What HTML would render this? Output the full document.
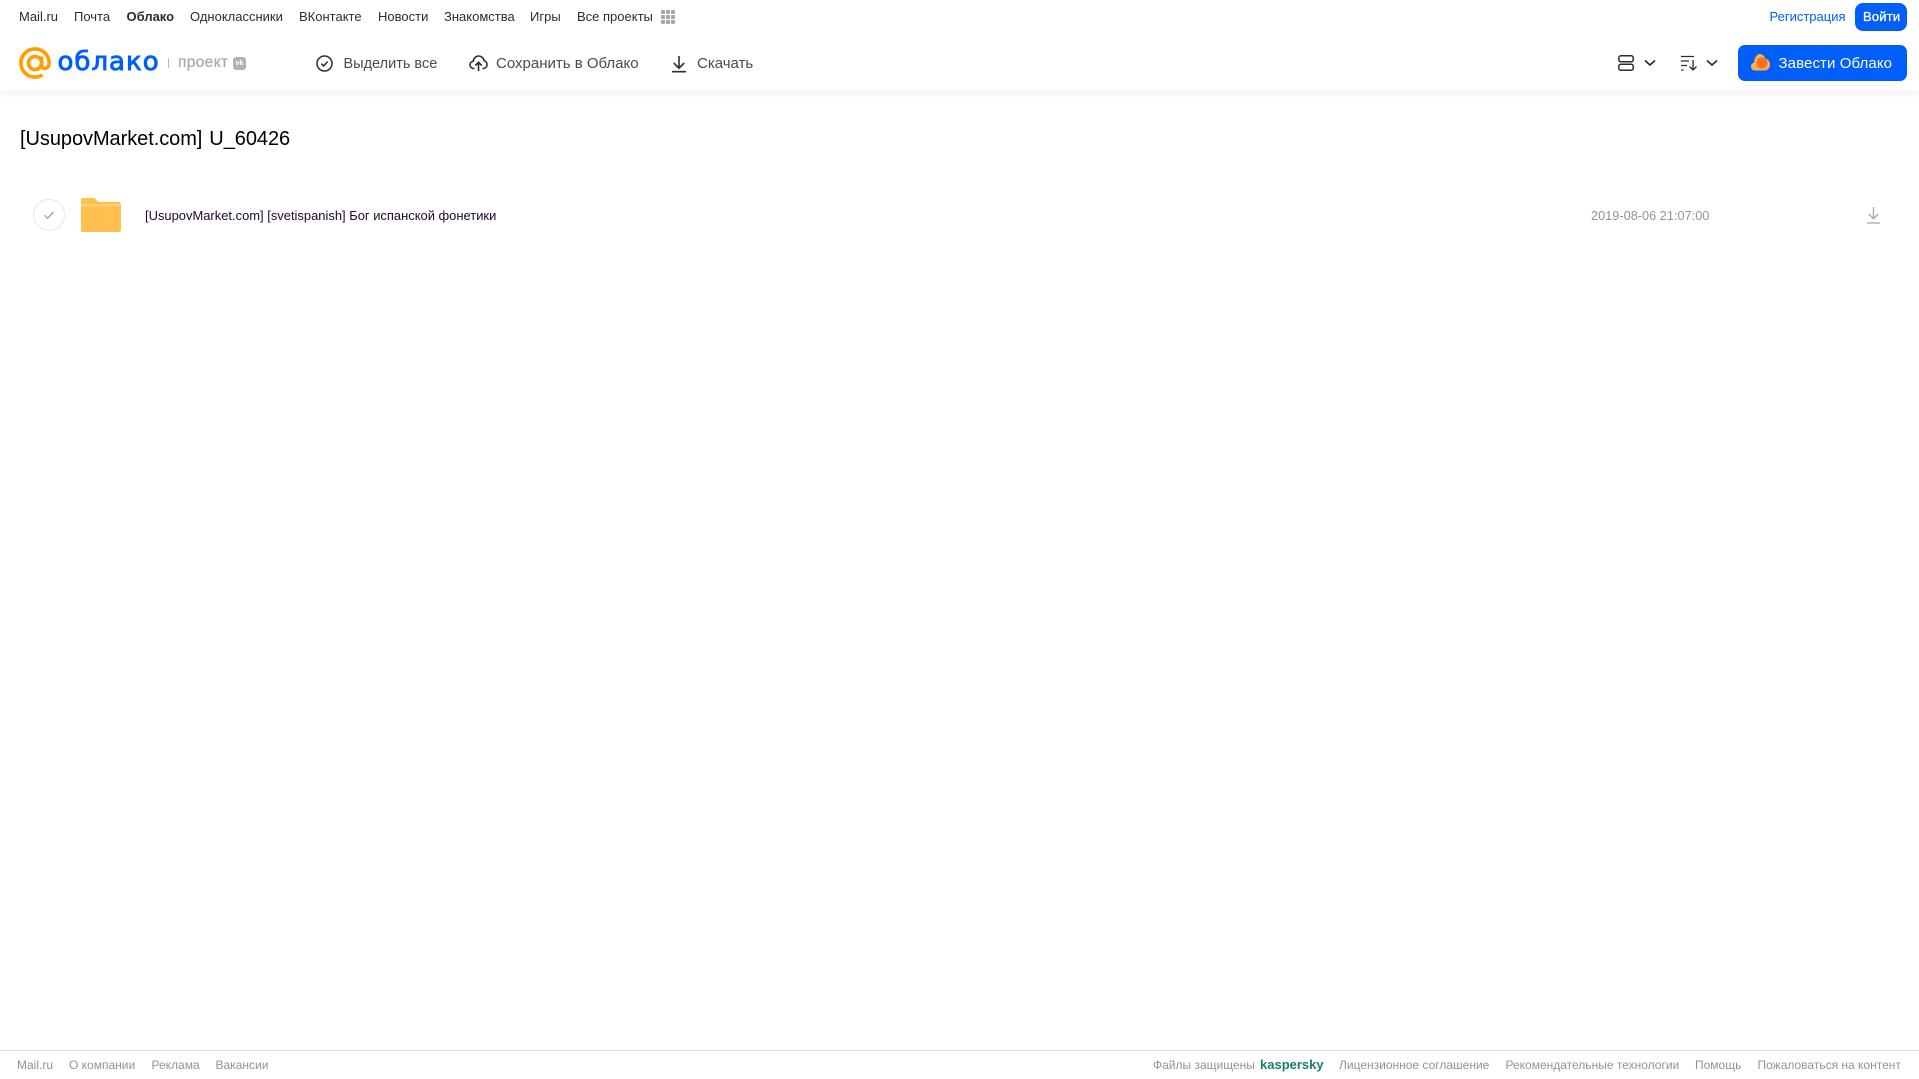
<!DOCTYPE html>
<html lang="ru"><head><meta charset="utf-8"><title>Облако</title>
<style>
html,body{margin:0;padding:0;background:#fff;width:1919px;height:1079px;overflow:hidden}
body{position:relative;font-family:"Liberation Sans","Noto Sans CJK SC",sans-serif}
.t{position:absolute;white-space:nowrap;display:block;text-decoration:none}
.n{top:8px;line-height:17px;font-size:13px;color:#2c2d2e}
.b{top:55px;line-height:18px;font-size:15px;color:#4a4b4d}
.f{top:1057px;line-height:16px;font-size:12px;color:#919399}
svg{position:absolute;display:block}
</style></head><body>
<div style="position:absolute;left:0;top:0;width:1919px;height:91px;background:#fff;box-shadow:0 2px 8px rgba(0,0,0,.07)"></div>

<a class="t n" style="left:19px">Mail.ru</a>
<a class="t n" style="left:74px">Почта</a>
<a class="t n" style="left:126.5px;font-weight:bold">Облако</a>
<a class="t n" style="left:190px">Одноклассники</a>
<a class="t n" style="left:299px">ВКонтакте</a>
<a class="t n" style="left:378px">Новости</a>
<a class="t n" style="left:444px">Знакомства</a>
<a class="t n" style="left:530px">Игры</a>
<a class="t n" style="left:577px">Все проекты</a>
<svg style="left:661px;top:10px" width="14" height="14" fill="#a5a7ab"><rect width="4" height="4" rx="1"/><rect x="5" width="4" height="4" rx="1"/><rect x="10" width="4" height="4" rx="1"/><rect y="5" width="4" height="4" rx="1"/><rect x="5" y="5" width="4" height="4" rx="1"/><rect x="10" y="5" width="4" height="4" rx="1"/><rect y="10" width="4" height="4" rx="1"/><rect x="5" y="10" width="4" height="4" rx="1"/><rect x="10" y="10" width="4" height="4" rx="1"/></svg>

<a class="t n" style="left:1769.5px;color:#005ff9">Регистрация</a>
<div style="position:absolute;left:1855px;top:3px;width:52px;height:28px;border-radius:8px;background:#005ff9"></div>
<a class="t n" style="left:1863px;color:#fff;-webkit-text-stroke:.35px #fff;letter-spacing:.2px">Войти</a>

<!-- logo -->
<svg style="left:19px;top:47px" width="32" height="32" viewBox="0 0 32 32" fill="none" stroke="#ff9e00" stroke-width="3.6"><circle cx="16" cy="16" r="6.6"/><path d="M22.6 9.5v8.2c0 5.2 7.4 5.2 7.5-1.7C30.100 8 23.700 1.900 16 1.900 8.200 1.900 1.900 8.200 1.900 16S8.200 30.100 16 30.100c3 0 5.400-.8 7.500-2.200"/></svg>
<span class="t" style="left:57.500px;top:46px;line-height:32px;font-family:'DejaVu Sans',sans-serif;font-size:26px;color:#005ff9;-webkit-text-stroke:.9px #005ff9;letter-spacing:1px">облако</span>
<div style="position:absolute;left:168px;top:58px;width:1px;height:10px;background:#b8babd"></div>
<span class="t" style="left:178px;top:53px;line-height:19px;font-size:15.5px;color:#a9abaf;-webkit-text-stroke:.3px #a9abaf;letter-spacing:.35px">проект</span>
<div style="position:absolute;left:233px;top:57px;width:13px;height:13px;border-radius:3px;background:#b0b2b6;color:#fff;font:bold 7px/13px 'Liberation Sans',sans-serif;text-align:center">vk</div>

<!-- toolbar -->
<svg style="left:316px;top:55px" width="17" height="17" viewBox="0 0 17 17" fill="none" stroke="#2c2d2e" stroke-width="1.500"><circle cx="8.500" cy="8.500" r="7.500"/><path d="M5.300 8.700l2.300 2.300 4.100-4.500"/></svg>
<span class="t b" style="left:343.500px;font-size:14.500px">Выделить все</span>
<svg style="left:469px;top:54px" width="19" height="18" viewBox="0 0 19 18" fill="none" stroke="#2c2d2e" stroke-width="1.600"><path d="M5.500 14.500H4.800C2.600 14.500 1 12.900 1 10.900c0-1.800 1.300-3.300 3.100-3.600C4.500 4.300 6.800 2 9.600 2c2.800 0 5 2 5.500 4.700 1.700.4 2.900 2 2.900 3.900 0 2.200-1.700 3.900-3.800 3.900h-.7"/><path d="M9.500 17V8.500M6.300 11.500l3.200-3.200 3.200 3.200"/></svg>
<span class="t b" style="left:496px">Сохранить в Облако</span>
<svg style="left:671px;top:55px" width="16" height="18" viewBox="0 0 16 18" fill="none" stroke="#2c2d2e" stroke-width="1.600"><path d="M8 1v12M2.800 8L8 13.200 13.200 8M1 16.700h14"/></svg>
<span class="t b" style="left:697px">Скачать</span>

<svg style="left:1618px;top:55px" width="16" height="16" viewBox="0 0 16 16" fill="none" stroke="#2c2d2e" stroke-width="1.500"><rect x=".8" y=".8" width="14.400" height="6" rx="2"/><rect x=".8" y="9.200" width="14.400" height="6" rx="2"/></svg>
<svg style="left:1644px;top:59px" width="12" height="8" viewBox="0 0 12 8" fill="none" stroke="#2c2d2e" stroke-width="1.700"><path d="M1 1.500l5 4.500 5-4.500"/></svg>
<svg style="left:1681px;top:55px" width="17" height="16" viewBox="0 0 17 16" fill="none" stroke="#2c2d2e" stroke-width="1.300"><path d="M0 1.500h13M0 6h8M0 10.500h6M0 15h2.500M12 5v10M8.500 11.500l3.500 3.500 3.500-3.500"/></svg>
<svg style="left:1706px;top:59px" width="12" height="8" viewBox="0 0 12 8" fill="none" stroke="#2c2d2e" stroke-width="1.700"><path d="M1 1.500l5 4.500 5-4.500"/></svg>

<div style="position:absolute;left:1738px;top:45px;width:169px;height:36px;border-radius:7px;background:#005ff9"></div>
<svg style="left:1751px;top:54px" width="19" height="17" viewBox="0 0 19 17"><path d="M4 16.500C1.800 16.500 0 14.800 0 12.500c0-1.900 1.300-3.400 3-3.900C3.500 4 5.500 0 8.800 0c2.600 0 4.700 1.800 5.200 4.500 2.800.2 5 2.900 5 6 0 3.300-2.400 6-5.400 6z" fill="#ffb14a"/><circle cx="11" cy="9" r="5.600" fill="#f5741f"/></svg>
<span class="t b" style="left:1778.500px;color:#fff;letter-spacing:.1px">Завести Облако</span>

<!-- content -->
<span class="t" style="left:20px;top:126px;line-height:26px;font-size:20px;color:#000;word-spacing:1.500px;letter-spacing:-.06px">[UsupovMarket.com] U_60426</span>
<div style="position:absolute;left:33px;top:199px;width:30px;height:30px;border:1px solid #e7e8ea;border-radius:50%"></div>
<svg style="left:43px;top:210px" width="12" height="10" viewBox="0 0 12 10" fill="none" stroke="#a0a2a6" stroke-width="1.400"><path d="M1.500 5.300l3 2.900 6-6.200"/></svg>
<svg style="left:81px;top:198px" width="40" height="34" viewBox="0 0 40 34"><path d="M2 0h10c2 0 3 1 4 2.500 .8 1 1.500 1.500 3 1.500h19c1.100 0 2 .9 2 2v26c0 1.100-.9 2-2 2H2c-1.100 0-2-.9-2-2V2C0 .9.900 0 2 0z" fill="#ffc14d"/><path d="M0 8.500h40V32c0 1.100-.9 2-2 2H2c-1.100 0-2-.9-2-2z" fill="#ffc04f"/><rect y="6" width="40" height="2.500" fill="#ffcf75"/></svg>
<span class="t" style="left:145px;top:208px;line-height:16px;font-size:12.950px;color:#22082c">[UsupovMarket.com] [svetispanish] Бог испанской фонетики</span>
<span class="t" style="left:1591px;top:208px;line-height:16px;font-size:12.750px;color:#919399">2019-08-06 21:07:00</span>
<svg style="left:1867px;top:207px" width="13" height="17" viewBox="0 0 13 17" fill="none" stroke="#a3a5a9" stroke-width="1.300"><path d="M6.500 0v11.500M1.800 7l4.700 4.700L11.200 7M0 16h13"/></svg>

<!-- footer -->
<div style="position:absolute;left:0;top:1050px;width:1919px;height:1px;background:#dcdde0"></div>
<a class="t f" style="left:17px">Mail.ru</a>
<a class="t f" style="left:69px">О компании</a>
<a class="t f" style="left:151.500px">Реклама</a>
<a class="t f" style="left:215.500px">Вакансии</a>
<a class="t f" style="left:1153px">Файлы защищены</a>
<a class="t f" style="left:1260px;font-size:13px;font-weight:bold;color:#1a7f68">kaspersky</a>
<a class="t f" style="left:1339px">Лицензионное соглашение</a>
<a class="t f" style="left:1505.500px">Рекомендательные технологии</a>
<a class="t f" style="left:1695px">Помощь</a>
<a class="t f" style="left:1757.500px">Пожаловаться на контент</a>
</body></html>
